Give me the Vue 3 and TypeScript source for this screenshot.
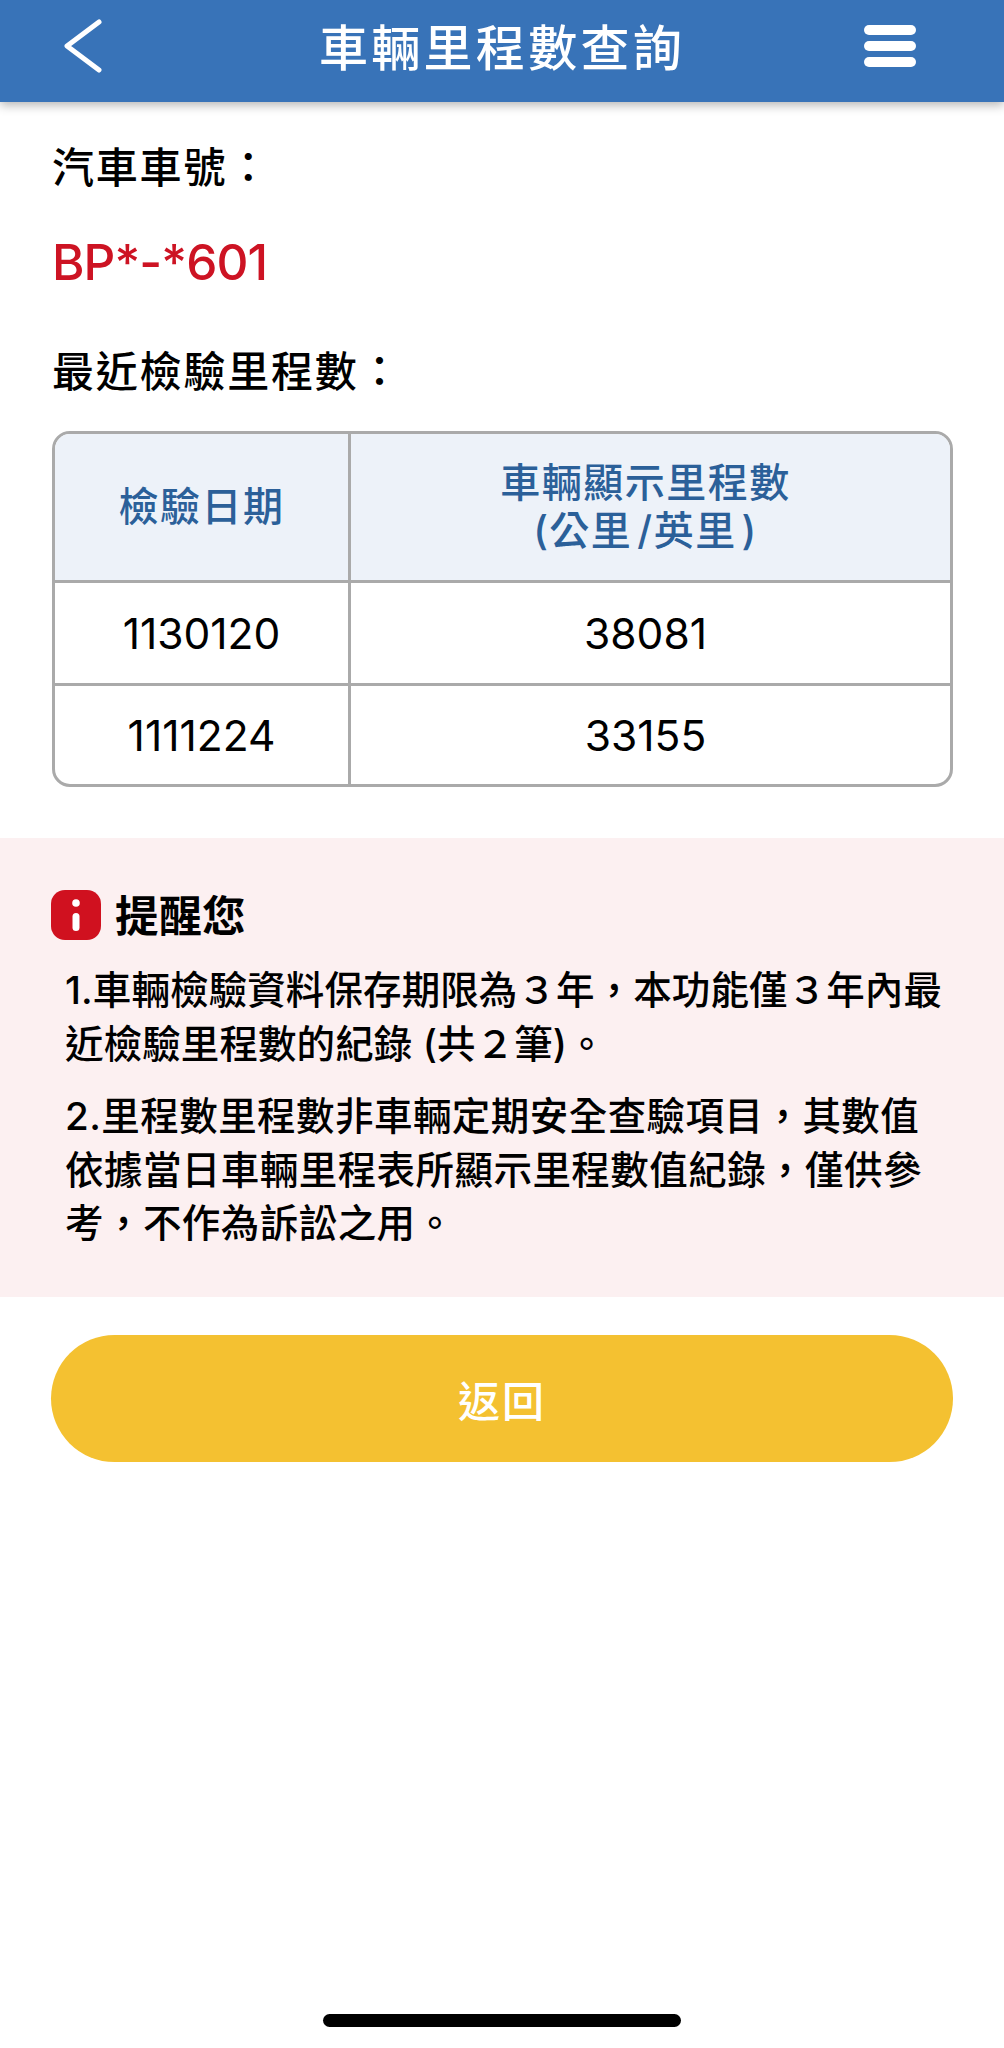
<script setup lang="ts">
const rows: [string, string][] = [
  ['1130120', '38081'],
  ['1111224', '33155'],
]
</script>

<template>
  <div class="page">
    <header class="bar">
      <svg class="back" width="42" height="56" viewBox="0 0 42 56" fill="none">
        <path d="M37 4 L5 28 L37 52" stroke="#fff" stroke-width="5" stroke-linecap="round" stroke-linejoin="round" />
      </svg>
      <h1 class="title">車輛里程數查詢</h1>
      <div class="burger"><i></i><i></i><i></i></div>
    </header>

    <main class="info">
      <div class="label">汽車車號：</div>
      <div class="plate">BP*-*601</div>
      <div class="label second">最近檢驗里程數：</div>
      <div class="table">
        <div class="cell head first">檢驗日期</div>
        <div class="cell head wide">車輛顯示里程數<br />(公里&#8202;/英里&#8202;)</div>
        <template v-for="r in rows" :key="r[0]">
          <div class="cell first">{{ r[0] }}</div>
          <div class="cell wide">{{ r[1] }}</div>
        </template>
      </div>
    </main>

    <section class="notice">
      <div class="notice-head">
        <span class="badge">
          <svg width="12" height="34" viewBox="0 0 12 34"><circle cx="6" cy="5" r="3.8" fill="#fff" /><rect x="2.5" y="15" width="7" height="18" rx="3.5" fill="#fff" /></svg>
        </span>
        <span class="notice-title">提醒您</span>
      </div>
      <p>1.車輛檢驗資料保存期限為３年，本功能僅３年內最近檢驗里程數的紀錄 (共２筆)。</p>
      <p class="loose">2.里程數里程數非車輛定期安全查驗項目，其數值依據當日車輛里程表所顯示里程數值紀錄，僅供參考，不作為訴訟之用。</p>
    </section>

    <div class="actions"><button class="btn" type="button">返回</button></div>

    <div class="home"></div>
  </div>
</template>

<style>
html, body { margin: 0; background: #fff; }
</style>

<style scoped>
.page {
  width: 1004px;
  height: 2048px;
  display: flex;
  flex-direction: column;
  box-sizing: border-box;
  background: #fff;
  color: #000;
  font-family: Inter, "Liberation Sans", "Noto Sans CJK TC", sans-serif;
}
.bar {
  position: relative;
  height: 102px;
  flex: none;
  display: grid;
  grid-template-columns: 1fr auto 1fr;
  align-items: center;
  padding: 0 62px;
  box-sizing: border-box;
  background: #3873b8;
  box-shadow: 0 3px 10px rgba(0, 0, 0, 0.3);
}
.back { margin-top: -10px; }
.title {
  margin: -13px 0 0;
  font-size: 49px;
  font-weight: 500;
  letter-spacing: 3.3px;
  color: #fff;
  white-space: nowrap;
}
.burger { justify-self: end; display: flex; flex-direction: column; gap: 6px; margin: -10px 26px 0 0; }
.burger i { display: block; width: 52px; height: 10px; border-radius: 5px; background: #fff; }
.info { padding: 40px 52px 0; }
.label { font-size: 42px; line-height: 52px; font-weight: 500; letter-spacing: 1.8px; }
.plate {
  margin-top: 38px;
  font-size: 49.5px;
  line-height: 60px;
  font-weight: 500;
  letter-spacing: -0.9px;
  color: #cd1323;
}
.second { margin-top: 54px; }
.table {
  margin-top: 33px;
  width: 901px;
  display: grid;
  grid-template-columns: 296px 1fr;
  grid-template-rows: 146px 103px 101px;
  box-sizing: border-box;
  border: 3px solid #aaa;
  border-radius: 18px;
  overflow: hidden;
}
.cell {
  display: flex;
  align-items: center;
  justify-content: center;
  text-align: center;
  font-size: 42.5px;
  border-top: 3px solid #aaa;
}
.first { border-right: 3px solid #aaa; }
.wide { padding-right: 10px; }
.head {
  border-top: 0;
  background: #edf2f9;
  color: #2b6099;
  font-size: 40px;
  line-height: 48px;
  font-weight: 500;
  letter-spacing: 1.5px;
}
.notice {
  margin-top: 51px;
  height: 459px;
  box-sizing: border-box;
  padding: 51px 52px 0;
  background: #fcf0f1;
}
.notice-head { display: flex; align-items: center; gap: 14px; margin-left: -1px; }
.badge {
  width: 50px;
  height: 50px;
  border-radius: 14px;
  background: #d0111f;
  display: flex;
  align-items: center;
  justify-content: center;
}
.notice-title { font-size: 43.5px; font-weight: 700; line-height: 50px; padding-top: 2px; }
.notice p {
  margin: 19px 0 0 13px;
  width: 880px;
  font-size: 38.5px;
  line-height: 53.5px;
  font-weight: 500;
  letter-spacing: 0.1px;
}
.notice-head + p { margin-top: 23px; }
.notice p.loose { letter-spacing: 0.45px; }
.actions { padding: 38px 51px 0; }
.btn {
  display: block;
  width: 902px;
  height: 127px;
  border: 0;
  border-radius: 64px;
  background: #f4c131;
  color: #fff;
  font: 500 42px Inter, "Noto Sans CJK TC", sans-serif;
  letter-spacing: 2px;
}
.home {
  margin: auto auto 21px;
  width: 358px;
  height: 13px;
  border-radius: 7px;
  background: #000;
}
</style>
